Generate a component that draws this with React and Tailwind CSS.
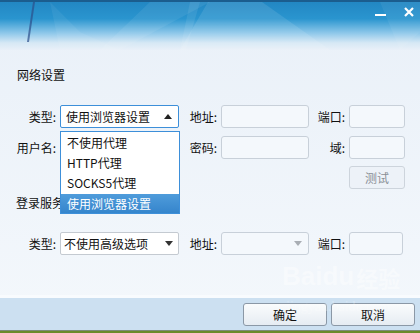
import React from "react";

const font = { fontFamily: '"Noto Sans CJK SC", "Noto Sans", sans-serif' };

function Label({ w, children }) {
  return (
    <div className={`${w} shrink-0 text-right pr-[4px] text-[12px] leading-[23px] text-[#111]`}>{children}</div>
  );
}

function Input({ w }) {
  return <div className={`${w} h-[23px] shrink-0 rounded-[3px] border border-[#c8d0d9] bg-[#f4f8fc]`} />;
}

function Up() {
  return (
    <svg width="8" height="5" viewBox="0 0 8 5"><path d="M0 5 L4 0 L8 5 Z" fill="#222" /></svg>
  );
}
function Down({ color = "#333" }) {
  return (
    <svg width="8" height="5" viewBox="0 0 8 5"><path d="M0 0 L8 0 L4 5 Z" fill={color} /></svg>
  );
}

export default function App() {
  return (
    <div style={font} className="relative w-[420px] h-[333px] overflow-hidden flex flex-col bg-gradient-to-b from-[#e9f0f8] to-[#f4f8fc]">
      {/* header */}
      <div className="relative h-[50px] shrink-0 border-t-2 border-[#1b5d8e] bg-[linear-gradient(to_bottom,#2287c3_0%,#2a95cf_35%,#8fc8ea_65%,#d6e8f5_85%,#e9f0f8_100%)]">
        <svg className="absolute inset-0" width="420" height="48" viewBox="0 0 420 48">
          <polygon points="33,0 35,0 29,40 27,40" fill="#2c4f8a" opacity="0.7" />
          <polygon points="50,0 80,30 120,48 60,48" fill="#ffffff" opacity="0.06" />
          <polygon points="150,0 210,0 120,48 100,48" fill="#ffffff" opacity="0.07" />
          <polygon points="208,0 262,0 330,48 180,48" fill="#ffffff" opacity="0.1" />
          <polygon points="190,0 200,0 186,48 180,48" fill="#ffffff" opacity="0.08" />
          <polygon points="380,0 420,0 420,30 400,48" fill="#ffffff" opacity="0.06" />
        </svg>
        <div className="absolute left-[375px] top-[12px] w-[11px] h-[2px] bg-white" />
        <svg className="absolute left-[404px] top-[5px]" width="10" height="10" viewBox="0 0 10 10">
          <path d="M1 1 L9 9 M9 1 L1 9" stroke="white" strokeWidth="2.2" />
        </svg>
      </div>

      {/* body */}
      <div className="flex flex-col">
        <div className="mt-[17px] pl-[17px] text-[12px] leading-[16px] text-[#111]">网络设置</div>

        <div className="mt-[22px] flex items-center">
          <Label w="w-[60px]">类型:</Label>
          <div className="w-[119px] h-[23px] shrink-0 flex items-center justify-between rounded-[2px] border border-[#3d8fd9] bg-white pl-[5px] pr-[6px] text-[12px] text-[#111]">
            <span>使用浏览器设置</span>
            <Up />
          </div>
          <Label w="w-[42px]">地址:</Label>
          <Input w="w-[88px]" />
          <Label w="w-[40px]">端口:</Label>
          <Input w="w-[56px]" />
        </div>

        <div className="mt-[8px] flex items-center">
          <Label w="w-[60px]">用户名:</Label>
          <div className="w-[119px] shrink-0" />
          <Label w="w-[42px]">密码:</Label>
          <Input w="w-[88px]" />
          <Label w="w-[40px]">域:</Label>
          <Input w="w-[56px]" />
        </div>

        <div className="mt-[7px] flex justify-end pr-[15px]">
          <div className="w-[56px] h-[23px] flex items-center justify-center rounded-[3px] border border-[#cdd4dc] bg-[#edf2f8] text-[12px] text-[#8a8f96]">测试</div>
        </div>

        <div className="mt-[6px] pl-[16px] text-[12px] leading-[16px] text-[#111]">登录服务器设置</div>

        <div className="mt-[21px] flex items-center">
          <Label w="w-[60px]">类型:</Label>
          <div className="w-[119px] h-[23px] shrink-0 flex items-center justify-between rounded-[2px] border border-[#c4cad1] bg-white pl-[3px] pr-[5px] text-[12px] text-[#111]">
            <span>不使用高级选项</span>
            <Down />
          </div>
          <Label w="w-[42px]">地址:</Label>
          <div className="w-[88px] h-[23px] shrink-0 flex items-center justify-end rounded-[3px] border border-[#c8d0d9] bg-[#f4f8fc] pr-[6px]">
            <Down color="#a9aeb4" />
          </div>
          <Label w="w-[40px]">端口:</Label>
          <Input w="w-[54px]" />
        </div>
      </div>

      <div className="flex-1" />
      <div className="h-[3px] bg-[#f8fbfe]" />

      {/* bottom bar */}
      <div className="relative h-[32px] shrink-0 bg-[#cce0f1] flex justify-end gap-[4px] pt-[5px] pr-[5px]">
        <div className="w-[84px] h-[23px] flex items-center justify-center rounded-[3px] border border-[#8b98a6] bg-gradient-to-b from-[#fafcfd] to-[#e6ecf2] text-[12px] text-[#111]">确定</div>
        <div className="w-[84px] h-[23px] flex items-center justify-center rounded-[3px] border border-[#8b98a6] bg-gradient-to-b from-[#fafcfd] to-[#e6ecf2] text-[12px] text-[#111]">取消</div>
      </div>
      <div className="h-[3px] shrink-0 border-t border-[#7d8a7a] bg-[#6b8a2c]" />

      {/* watermark */}
      <div className="pointer-events-none absolute left-[282px] top-[262px] flex items-end text-white opacity-40">
        <span className="text-[26px] font-bold leading-[28px]" style={{ fontFamily: '"Liberation Sans", sans-serif' }}>Baidu</span>
        <span className="ml-[2px] text-[22px] font-bold leading-[26px]">经验</span>
      </div>
      <div className="pointer-events-none absolute left-[286px] top-[299px] text-[14px] leading-[16px] text-white opacity-25" style={{ fontFamily: '"Liberation Serif", serif' }}>jingyan.baidu.com</div>

      {/* dropdown list overlay */}
      <div className="absolute left-[60px] top-[131px] w-[120px] h-[83px] border border-[#3d8fd9] bg-white flex flex-col pt-[1px] text-[12px] text-[#111]">
        <div className="h-[20px] leading-[20px] pl-[6px]">不使用代理</div>
        <div className="h-[20px] leading-[20px] pl-[6px]">HTTP代理</div>
        <div className="h-[20px] leading-[20px] pl-[6px]">SOCKS5代理</div>
        <div className="h-[19px] leading-[19px] pl-[6px] mt-auto text-white bg-gradient-to-b from-[#4f9cdb] to-[#3585cc]">使用浏览器设置</div>
      </div>
    </div>
  );
}
